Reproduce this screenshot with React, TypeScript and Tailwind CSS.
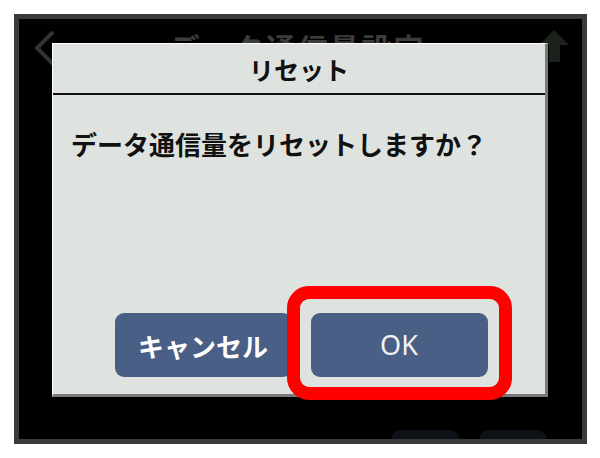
import React from "react";

const jp = { fontFamily: '"Noto Sans CJK JP", "Noto Sans", sans-serif' };

export default function App() {
  return (
    <div className="w-[600px] h-[458px] bg-white pt-[14px] pl-[14px]" style={jp}>
      <div className="relative w-[573px] h-[430px] border-[5px] border-[#3a3a3a] bg-black overflow-hidden flex flex-col">
        {/* background header */}
        <div className="h-[50px] flex items-start justify-between px-[15px] pt-[11px]">
          <svg width="22" height="36" viewBox="0 0 22 36">
            <path d="M19 2 L3 18 L19 34" fill="none" stroke="#333" strokeWidth="4" />
          </svg>
          <div className="h-[13px] overflow-hidden">
            <div className="text-[30px] leading-[30px] font-bold text-[#3c3c3c] mt-[2px] tracking-[2px]">
              データ通信量設定
            </div>
          </div>
          <svg width="30" height="32" viewBox="0 0 30 32" className="mr-[-2px]">
            <path d="M15 0 L30 15 L21 15 L21 32 L10 32 L10 15 L0 15 Z" fill="#1b211b" />
          </svg>
        </div>
        <div className="flex-1" />
        {/* background bottom buttons */}
        <div className="h-[9px] flex justify-end gap-[19px] pr-[35px]">
          <div className="w-[69px] h-[30px] rounded-[10px] bg-[#0e1218]" />
          <div className="w-[68px] h-[30px] rounded-[10px] bg-[#0e1218]" />
        </div>

        {/* dialog */}
        <div className="absolute left-[33px] top-[24px] w-[496px] h-[354px] bg-[#dfe3df] border-l border-t border-l-white border-t-white border-r-[3px] border-b-[3px] border-r-[#7a7a7a] border-b-[#7a7a7a] flex flex-col">
          <div className="h-[51px] flex items-center justify-center border-b-2 border-b-[#111] text-[25px] font-bold text-[#111] pt-[2px]">
            リセット
          </div>
          <div className="pl-[18px] pt-[31px] text-[26px] leading-[36px] font-bold text-[#111]">
            データ通信量をリセットしますか？
          </div>
          <div className="flex-1" />
          <div className="flex justify-center gap-[19px] pb-[17px] pl-[4px]">
            <button className="w-[177px] h-[64px] rounded-[9px] bg-[#4a5f86] text-white text-[26px] font-bold flex items-center justify-center">
              キャンセル
            </button>
            <div className="relative">
              <button
                className="w-[177px] h-[64px] rounded-[9px] bg-[#4a5f86] text-[#f2f2f2] text-[27px] flex items-center justify-center"
                style={{ fontFamily: '"Noto Sans", sans-serif' }}
              >
                OK
              </button>
              <div className="absolute -left-[24px] -top-[27px] -right-[24px] -bottom-[23px] border-[13px] border-[#ff0000] rounded-[22px]" />
            </div>
          </div>
        </div>
      </div>
    </div>
  );
}
